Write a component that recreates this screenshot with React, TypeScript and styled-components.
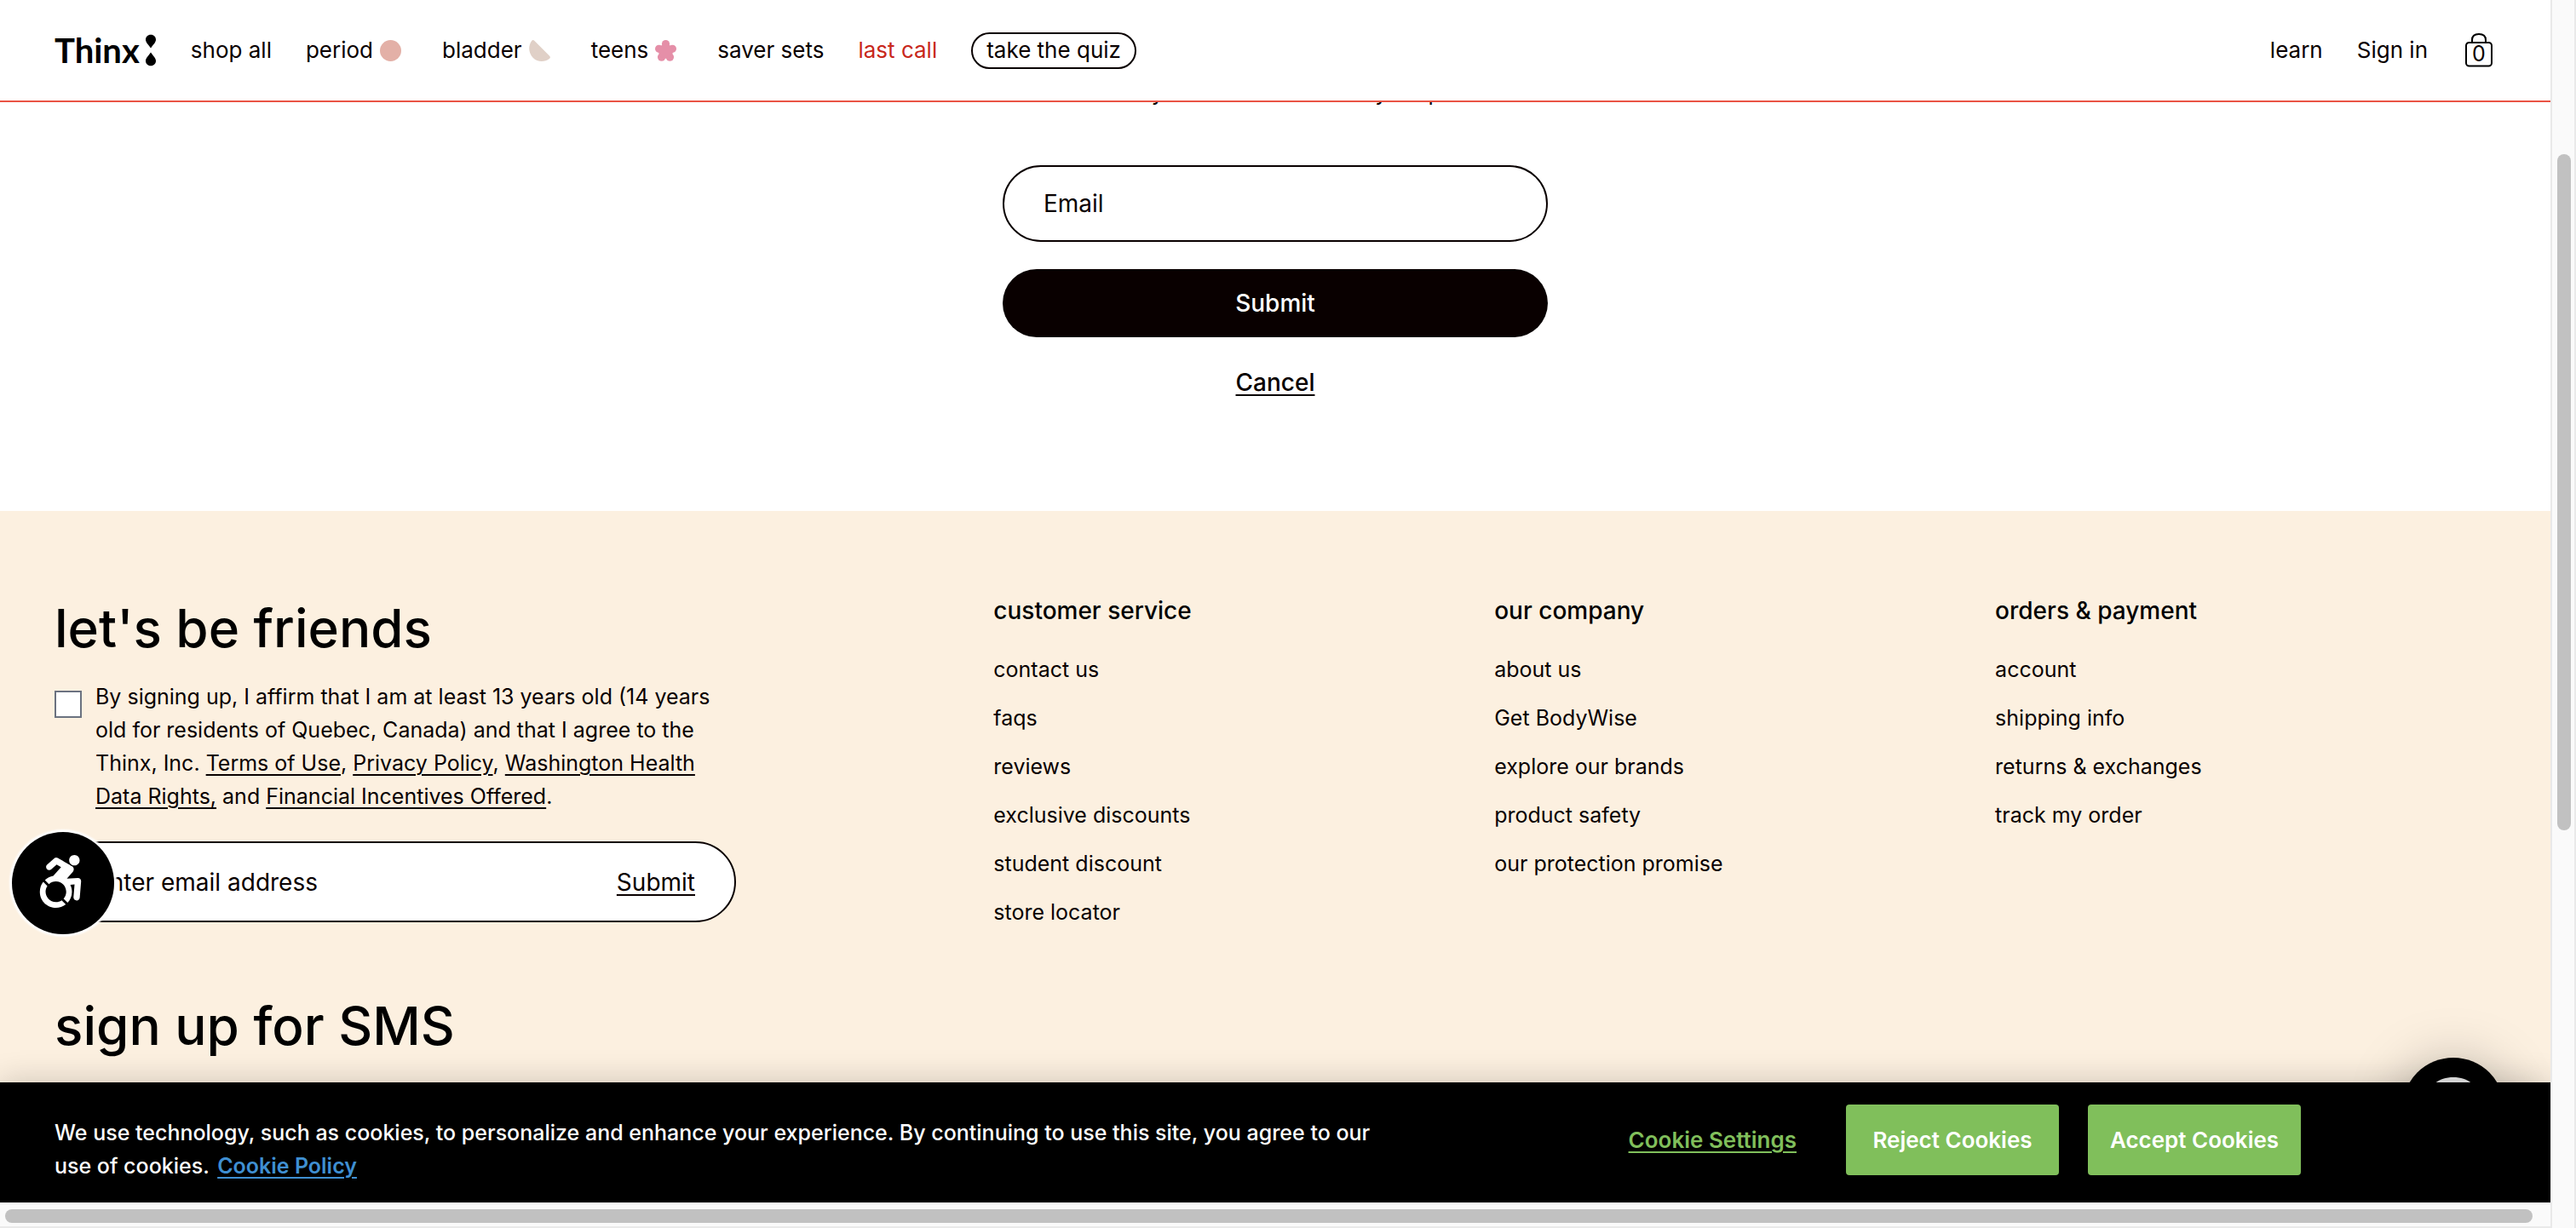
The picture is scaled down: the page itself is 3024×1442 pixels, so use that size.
import React from "react";
import styled, { createGlobalStyle } from "styled-components";
import { FaAccessibleIcon } from "react-icons/fa";

const ink = "#090000";

const GlobalStyle = createGlobalStyle`
  *, *::before, *::after { box-sizing: border-box; }
  body {
    margin: 0;
    overflow: hidden;
    background: #fff;
    color: ${ink};
    font-family: Inter, "Open Sans", sans-serif;
    font-size: 25px;
  }
  h2, h3, p, ul { margin: 0; padding: 0; }
  ul { list-style: none; }
  a { color: inherit; }
  button, input { font: inherit; color: inherit; margin: 0; }
  button { cursor: pointer; }
`;

const Window = styled.div`
  display: grid;
  grid-template-columns: minmax(0, 1fr) 30px;
  grid-template-rows: minmax(0, 1fr) 30px;
  height: 100vh;
  background: #fafafa;
`;

const Page = styled.div`
  position: relative;
  overflow: hidden;
  background: #fff;
`;

const Track = styled.div<{ $vertical?: boolean }>`
  display: flex;
  flex-direction: ${(p) => (p.$vertical ? "column" : "row")};
  grid-row: ${(p) => (p.$vertical ? "1 / 3" : "2")};
  grid-column: ${(p) => (p.$vertical ? "2" : "1")};
  padding: ${(p) => (p.$vertical ? "181px 4px 0 6px" : "6px 21px 4px 6px")};
  background: #fafafa;
  border: solid #e9e9e9;
  border-width: ${(p) => (p.$vertical ? "0 2px 0 2px" : "2px 0 2px 0")};
`;

const Thumb = styled.div<{ $length: string }>`
  flex: 0 0 ${(p) => p.$length};
  border-radius: 8px;
  background: #c1c1c1;
`;

const Header = styled.header`
  position: absolute;
  inset: 0 0 auto;
  z-index: 2;
  display: flex;
  align-items: center;
  justify-content: space-between;
  height: 120px;
  padding: 0 64px;
  background: #fff;
  border-bottom: 2px solid #ea5344;
  font-size: 26px;
`;

const Nav = styled.nav`
  display: flex;
  align-items: center;
  gap: 40px;
`;

const Logo = styled.a`
  display: flex;
  align-items: center;
  gap: 6px;
  color: #000;
  font-family: Lato, sans-serif;
  font-size: 40px;
  font-weight: 700;
  line-height: 48px;
  text-decoration: none;
`;

const NavLink = styled.a<{ $sale?: boolean }>`
  display: flex;
  align-items: center;
  gap: 8px;
  color: ${(p) => (p.$sale ? "#c8271b" : ink)};
  line-height: 32px;
  text-decoration: none;
  svg { margin-right: 8px; }
`;

const QuizLink = styled(NavLink)`
  height: 43px;
  padding: 0 16px;
  border: 2px solid ${ink};
  border-radius: 22px;
`;

const BagButton = styled.button`
  position: relative;
  display: flex;
  justify-content: center;
  width: 40px;
  padding: 0;
  border: 0;
  background: none;
`;

const BagCount = styled.span`
  position: absolute;
  inset: 8px 0 0;
  font-size: 25px;
  line-height: 32px;
`;

const Main = styled.main`
  display: flex;
  flex-direction: column;
  align-items: center;
  padding: 86px 64px 130px;
`;

const ResetForm = styled.form`
  display: flex;
  flex-direction: column;
  align-items: center;
  gap: 32px;
  width: 640px;
  font-size: 28px;
`;

const Intro = styled.p`
  padding-bottom: 30px;
  font-size: 26px;
  line-height: 46px;
  white-space: nowrap;
`;

const EmailInput = styled.input`
  width: 100%;
  height: 90px;
  padding: 0 46px;
  border: 2px solid ${ink};
  border-radius: 45px;
  background: #fff;
  &::placeholder { color: ${ink}; opacity: 1; }
`;

const SubmitButton = styled.button`
  width: 100%;
  height: 80px;
  border: 0;
  border-radius: 40px;
  background: ${ink};
  color: #fff;
  font-weight: 500;
`;

const CancelLink = styled.a`
  font-weight: 500;
  line-height: 42px;
  text-underline-offset: 4px;
  text-decoration-thickness: 2px;
`;

const Footer = styled.footer`
  display: grid;
  grid-template-columns: 15fr 8fr 8fr 8fr;
  padding: 98px 64px;
  min-height: 900px;
  background: #fcf0e0;
`;

const SignUp = styled.section`
  display: flex;
  flex-direction: column;
  width: 800px;
`;

const BigTitle = styled.h2`
  color: #000;
  font-size: 62px;
  font-weight: 500;
  line-height: 80px;
`;

const Consent = styled.label`
  display: flex;
  align-items: flex-start;
  gap: 16px;
  margin: 21px 0 33px;
  line-height: 39px;
`;

const Checkbox = styled.input`
  flex: none;
  appearance: none;
  width: 32px;
  height: 32px;
  margin-top: 12px;
  border: 2px solid #6b7280;
  background: #fff;
`;

const TextLink = styled.a`
  text-underline-offset: 4px;
  text-decoration-thickness: 2px;
`;

const NewsletterForm = styled.form`
  display: flex;
  align-items: center;
  height: 95px;
  margin-bottom: 82px;
  padding: 0 46px;
  border: 2px solid ${ink};
  border-radius: 48px;
  background: #fff;
  font-size: 28px;
`;

const NewsletterInput = styled.input`
  flex: 1;
  min-width: 0;
  padding: 0;
  border: 0;
  background: none;
  &::placeholder { color: ${ink}; opacity: 1; }
`;

const PlainButton = styled.button`
  padding: 0;
  border: 0;
  background: none;
  text-decoration: underline 2px;
  text-underline-offset: 4px;
`;

const ColumnTitle = styled.h3`
  margin-bottom: 22px;
  color: #000;
  font-size: 28px;
  font-weight: 500;
  line-height: 38px;
`;

const ColumnItem = styled.li`
  line-height: 57px;
  a { text-decoration: none; }
`;

const CookieBanner = styled.section`
  position: absolute;
  inset: auto 0 0;
  z-index: 3;
  display: flex;
  align-items: flex-start;
  justify-content: space-between;
  padding: 26px 293px 32px 64px;
  background: #000;
  color: #fff;
  font-weight: 500;
  box-shadow: 0 0 36px rgba(0, 0, 0, 0.2);
`;

const CookieText = styled.p`
  width: 1580px;
  margin: 14px 0 -9px;
  line-height: 39px;
`;

const PolicyLink = styled(TextLink)`
  margin-left: 3px;
  color: #3f8fd2;
  font-weight: 600;
`;

const CookieActions = styled.div`
  display: flex;
  align-items: center;
  gap: 34px;
  font-size: 26px;
`;

const SettingsButton = styled(PlainButton)`
  margin-right: 24px;
  color: #80bf5b;
  font-weight: 600;
`;

const CookieButton = styled.button`
  width: 250px;
  height: 83px;
  padding: 0;
  border: 0;
  border-radius: 4px;
  background: #80bf5b;
  color: #fff;
  font-weight: 600;
`;

const RoundButton = styled.button`
  position: absolute;
  display: flex;
  align-items: center;
  justify-content: center;
  width: 120px;
  height: 120px;
  padding: 0;
  border: 0;
  border-radius: 50%;
  background: #000;
  color: #fff;
`;

const AccessibilityButton = styled(RoundButton)`
  left: 14px;
  bottom: 315px;
  padding: 0 6px 4px 0;
  box-shadow: 0 0 2px 3px #fff;
`;

const ChatButton = styled(RoundButton)`
  right: 54px;
  bottom: 50px;
  box-shadow: 0 4px 64px rgba(0, 0, 0, 0.25);
`;

const LogoDrops = () => (
  <svg width="14" height="38" viewBox="0 0 14 38" aria-hidden="true">
    <path d="M7 0.8C3.4 0.8 1 3.4 1 6.6C1 9.8 4 12.4 7 16.6C10 12.4 13 9.8 13 6.6C13 3.4 10.6 0.8 7 0.8Z" />
    <path d="M7 37.2C3.4 37.2 1 34.6 1 31.4C1 28.2 4 25.6 7 21.4C10 25.6 13 28.2 13 31.4C13 34.6 10.6 37.2 7 37.2Z" />
  </svg>
);

const PeriodIcon = () => (
  <svg width="25" height="25" viewBox="0 0 24 24" aria-hidden="true">
    <circle cx="12" cy="12" r="12" fill="#e3b0a7" />
  </svg>
);

const BladderIcon = () => (
  <svg width="25" height="25" viewBox="0 0 24 24" aria-hidden="true">
    <path d="M3 1C4 -0.2 5 -0.2 6 0.8L23 17.8C24.2 19 24.2 20 23.2 20.8C17.6 25.2 9.6 25 4.4 19.8C-0.8 14.6 -1 6.6 3 1Z" fill="#e0d0c7" />
  </svg>
);

const FlowerIcon = () => (
  <svg width="25" height="25" viewBox="0 0 24 24" fill="#e58fa8" aria-hidden="true">
    <circle cx="12" cy="4.4" r="4.4" />
    <circle cx="4.4" cy="9.9" r="4.4" />
    <circle cx="19.6" cy="9.9" r="4.4" />
    <circle cx="7.3" cy="19.3" r="4.5" />
    <circle cx="16.7" cy="19.3" r="4.5" />
    <circle cx="12" cy="12.6" r="8.2" />
  </svg>
);

const BagIcon = () => (
  <svg width="32" height="40" viewBox="0 0 32 40" fill="none" stroke="#000" strokeWidth="2" aria-hidden="true">
    <rect x="1" y="11" width="30" height="27.5" rx="3.5" />
    <path d="M8 11V8C8 3.5 11 1 16 1S24 3.5 24 8V11" />
  </svg>
);

const ChatIcon = () => (
  <svg width="72" height="74" viewBox="0 0 72 74" aria-hidden="true">
    <path d="M36 0C16 0 2 14 2 33S16 66 36 66C40 66 44 65 48 63L64 74L60 56C67 50 70 42 70 33C70 14 56 0 36 0Z" fill="#e8e8e8" />
  </svg>
);

const columns = [
  {
    title: "customer service",
    links: ["contact us", "faqs", "reviews", "exclusive discounts", "student discount", "store locator"],
  },
  {
    title: "our company",
    links: ["about us", "Get BodyWise", "explore our brands", "product safety", "our protection promise"],
  },
  {
    title: "orders & payment",
    links: ["account", "shipping info", "returns & exchanges", "track my order"],
  },
];

export default function App() {
  return (
    <>
      <GlobalStyle />
      <Window>
        <Page>
          <Header>
            <Nav aria-label="Shop">
              <Logo href="#">
                Thinx
                <LogoDrops />
              </Logo>
              <NavLink href="#">shop all</NavLink>
              <NavLink href="#">period <PeriodIcon /></NavLink>
              <NavLink href="#">bladder <BladderIcon /></NavLink>
              <NavLink href="#">teens <FlowerIcon /></NavLink>
              <NavLink href="#">saver sets</NavLink>
              <NavLink href="#" $sale>last call</NavLink>
              <QuizLink href="#">take the quiz</QuizLink>
            </Nav>
            <Nav aria-label="Account">
              <NavLink href="#">learn</NavLink>
              <NavLink href="#">Sign in</NavLink>
              <BagButton type="button" aria-label="Bag">
                <BagIcon />
                <BagCount>0</BagCount>
              </BagButton>
            </Nav>
          </Header>

          <Main>
            <ResetForm>
              <Intro>We will send you an email to reset your password.</Intro>
              <EmailInput type="email" placeholder="Email" aria-label="Email" />
              <SubmitButton type="button">Submit</SubmitButton>
              <CancelLink href="#">Cancel</CancelLink>
            </ResetForm>
          </Main>

          <Footer>
            <SignUp>
              <BigTitle>let's be friends</BigTitle>
              <Consent>
                <Checkbox type="checkbox" />
                <span>
                  By signing up, I affirm that I am at least 13 years old (14 years old for residents of
                  Quebec, Canada) and that I agree to the Thinx, Inc.{" "}
                  <TextLink href="#">Terms of Use</TextLink>, <TextLink href="#">Privacy Policy</TextLink>,{" "}
                  <TextLink href="#">Washington Health Data Rights,</TextLink> and{" "}
                  <TextLink href="#">Financial Incentives Offered</TextLink>.
                </span>
              </Consent>
              <NewsletterForm>
                <NewsletterInput type="email" placeholder="Enter email address" aria-label="Enter email address" />
                <PlainButton type="button">Submit</PlainButton>
              </NewsletterForm>
              <BigTitle>sign up for SMS</BigTitle>
            </SignUp>
            {columns.map((column) => (
              <nav key={column.title} aria-label={column.title}>
                <ColumnTitle>{column.title}</ColumnTitle>
                <ul>
                  {column.links.map((link) => (
                    <ColumnItem key={link}>
                      <a href="#">{link}</a>
                    </ColumnItem>
                  ))}
                </ul>
              </nav>
            ))}
          </Footer>

          <AccessibilityButton type="button" aria-label="Accessibility">
            <FaAccessibleIcon size={62} />
          </AccessibilityButton>
          <ChatButton type="button" aria-label="Chat">
            <ChatIcon />
          </ChatButton>

          <CookieBanner aria-label="Cookies">
            <CookieText>
              We use technology, such as cookies, to personalize and enhance your experience. By continuing to
              use this site, you agree to our use of cookies. <PolicyLink href="#">Cookie Policy</PolicyLink>
            </CookieText>
            <CookieActions>
              <SettingsButton type="button">Cookie Settings</SettingsButton>
              <CookieButton type="button">Reject Cookies</CookieButton>
              <CookieButton type="button">Accept Cookies</CookieButton>
            </CookieActions>
          </CookieBanner>
        </Page>
        <Track $vertical>
          <Thumb $length="794px" />
        </Track>
        <Track>
          <Thumb $length="100%" />
        </Track>
      </Window>
    </>
  );
}
